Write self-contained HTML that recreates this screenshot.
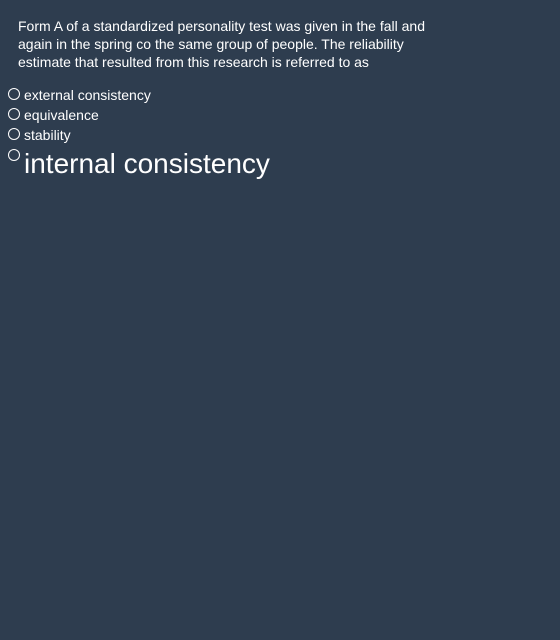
<!DOCTYPE html>
<html><head><style>
body{margin:0;width:560px;height:640px;background:#2e3d4f;font-family:"Liberation Sans",sans-serif;color:#fff;position:relative;overflow:hidden}
.q{position:absolute;left:18px;top:17px;font-size:14px;line-height:18px;width:420px}
.o{position:absolute;left:8px;font-size:14px;line-height:20px;white-space:nowrap}
.c{display:inline-block;width:10px;height:10px;border:1px solid #fff;border-radius:50%;margin-right:4px;vertical-align:0px}
</style></head><body>
<div class="q">Form A of a standardized personality test was given in the fall and again in the spring co the same group of people. The reliability estimate that resulted from this research is referred to as</div>
<div class="o" style="top:85px"><span class="c"></span>external consistency</div>
<div class="o" style="top:105px"><span class="c"></span>equivalence</div>
<div class="o" style="top:125px"><span class="c"></span>stability</div>
<div class="o" style="top:146px"><span class="c" style="vertical-align:top;margin-top:3px"></span><span style="font-size:28px;line-height:36px">internal consistency</span></div>
</body></html>
